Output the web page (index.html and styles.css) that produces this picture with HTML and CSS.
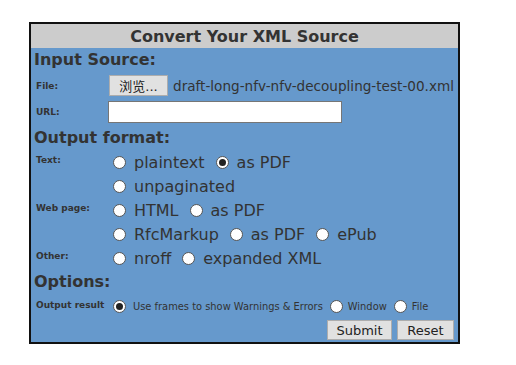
FILE: index.html
```html
<!DOCTYPE html>
<html>
<head>
<meta charset="utf-8">
<link rel="stylesheet" href="styles.css">
</head>
<body>
<form class="box">
  <div class="title">Convert Your XML Source</div>
  <div class="body">
    <div class="section first">Input Source:</div>
    <div class="grid">
      <div class="label mid r-file">File:</div>
      <div class="field r-file"><span class="btn browse">浏览...</span><span class="fname">draft-long-nfv-nfv-decoupling-test-00.xml</span></div>
      <div class="label mid r-url">URL:</div>
      <div class="field r-url"><span class="textbox"></span></div>
    </div>
    <div class="section">Output format:</div>
    <div class="grid">
      <div class="label top">Text:</div>
      <div class="field opt"><span class="radio"></span>plaintext<span class="radio on"></span>as PDF</div>
      <div class="label"></div>
      <div class="field opt"><span class="radio"></span>unpaginated</div>
      <div class="label top">Web page:</div>
      <div class="field opt"><span class="radio"></span>HTML<span class="radio"></span>as PDF</div>
      <div class="label"></div>
      <div class="field opt"><span class="radio"></span>RfcMarkup<span class="radio"></span>as PDF<span class="radio"></span>ePub</div>
      <div class="label top">Other:</div>
      <div class="field opt"><span class="radio"></span>nroff<span class="radio"></span>expanded XML</div>
    </div>
    <div class="section">Options:</div>
    <div class="grid">
      <div class="label result">Output result</div>
      <div class="field small"><span class="radio on"></span>Use frames to show Warnings &amp; Errors<span class="radio"></span>Window<span class="radio"></span>File</div>
    </div>
    <div class="actions">
      <span class="btn action submit">Submit</span>
      <span class="btn action reset">Reset</span>
    </div>
  </div>
</form>
</body>
</html>
```
FILE: styles.css
```css
html, body {
  margin: 0;
  background: #fff;
}
body {
  font-family: "DejaVu Sans", Verdana, sans-serif;
  color: #333;
}
.box {
  margin: 22px 0 0 29px;
  width: 427px;
  border: 2px solid #111;
  background: #6699cc;
}
.title {
  background: #cccccc;
  height: 24px;
  line-height: 25px;
  text-align: center;
  font-weight: bold;
  font-size: 16px;
}
.body {
  padding: 0 0 2px 3px;
}
.section {
  font-weight: bold;
  font-size: 16px;
  height: 24px;
  line-height: 24px;
}
.section.first {
  height: 25px;
}
.grid {
  display: grid;
  grid-template-columns: 72px 1fr;
  padding-left: 2px;
}
.label {
  font-weight: bold;
  font-size: 9px;
}
.label.mid {
  display: flex;
  align-items: center;
}
.label.top {
  padding-top: 5px;
}
.field {
  display: flex;
  align-items: center;
}
.r-file { height: 25px; }
.r-url { height: 28px; }
.btn {
  box-sizing: border-box;
  display: inline-flex;
  align-items: center;
  justify-content: center;
  background: #e1e1e1;
  border: 1px solid #adadad;
  color: #222;
  font-size: 13px;
}
.browse {
  width: 59px;
  height: 21px;
  font-family: "DejaVu Sans", "Noto Sans CJK SC", sans-serif;
  margin-left: 1px;
}
.fname {
  margin-left: 5px;
  font-size: 13.6px;
  white-space: nowrap;
}
.textbox {
  box-sizing: border-box;
  display: block;
  width: 234px;
  height: 22px;
  background: #fff;
  border: 1px solid #767676;
}
.opt {
  height: 24px;
  font-size: 16px;
}
.radio {
  box-sizing: border-box;
  display: inline-block;
  flex: none;
  width: 13px;
  height: 13px;
  border-radius: 50%;
  background: #fff;
  border: 1px solid #555;
  margin: 0 8px 0 11px;
  position: relative;
}
.radio:first-child {
  margin-left: 5px;
}
.radio.on::after {
  content: "";
  position: absolute;
  left: 2px;
  top: 2px;
  width: 7px;
  height: 7px;
  border-radius: 50%;
  background: #222;
}
.result {
  padding-top: 6px;
}
.small {
  height: 25px;
  font-size: 9.9px;
}
.small .radio {
  margin: 0 5px 0 7px;
}
.small .radio:first-child {
  margin: 0 7px 0 5px;
}
.actions {
  display: flex;
  justify-content: flex-end;
  gap: 5px;
  padding: 1px 4px 0 0;
}
.action {
  height: 20px;
  font-size: 13px;
}
.submit { width: 65px; }
.reset { width: 57px; }
```
